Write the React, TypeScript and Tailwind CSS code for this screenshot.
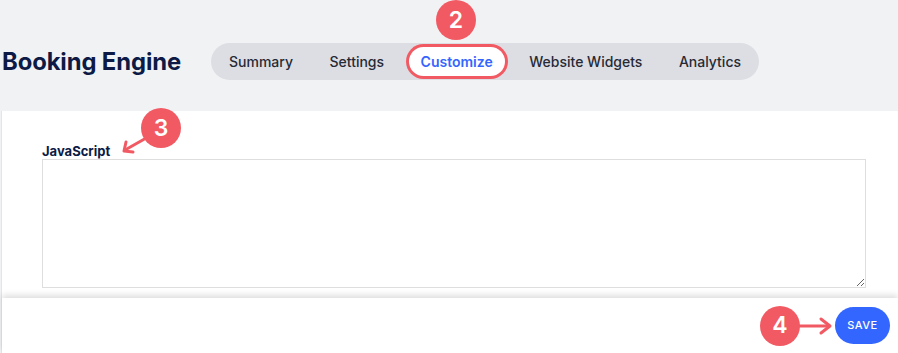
import React from "react";

const tabs = ["Summary", "Settings", "Customize", "Website Widgets", "Analytics"];

function Badge({ n, className }: { n: number; className: string }) {
  return (
    <div
      className={
        "absolute flex h-10 w-10 items-center justify-center rounded-full bg-[#f25a63] text-[23px] font-semibold text-white " +
        className
      }
    >
      {n}
    </div>
  );
}

export default function App() {
  return (
    <div className="relative flex h-[353px] w-[898px] flex-col overflow-hidden bg-[#f1f2f4] font-['Inter',sans-serif]">
      {/* Header */}
      <header className="relative flex h-[111px] shrink-0 items-center pl-[2px] pt-[12px]">
        <h1 className="text-[23.8px] font-bold tracking-[-0.1px] text-[#0c1a45]">Booking Engine</h1>
        <nav className="ml-[30px] flex h-[37px] items-center gap-[12.5px] rounded-full bg-[#dcdee3] px-[6px]">
          {tabs.map((t) =>
            t === "Customize" ? (
              <button
                key={t}
                className="h-[29px] rounded-full bg-white px-3 text-[14px] font-semibold text-[#3366ff] ring-[3px] ring-[#f25a63]"
              >
                {t}
              </button>
            ) : (
              <button key={t} className="h-[29px] px-3 text-[14px] font-medium text-[#272a36]">
                {t}
              </button>
            )
          )}
        </nav>
        <Badge n={2} className="left-[436px] top-0" />
      </header>

      {/* Body */}
      <main className="relative ml-px flex flex-1 flex-col border-l border-[#e4e5e8] bg-white">
        <section className="relative flex-1 pl-[40px] pr-[32px] pt-[33px]">
          <label className="block text-[13px] font-bold leading-[14px] text-[#0c1a45]">JavaScript</label>
          <textarea className="mt-[1px] block h-[129px] w-full resize-y border border-[#dedede] bg-white outline-none" />
          <Badge n={3} className="left-[139px] top-[-3px]" />
          <svg className="absolute left-[118px] top-[20px]" width="32" height="26" viewBox="0 0 32 26" fill="none">
            <path d="M28 6 L5 19" stroke="#f25a63" strokeWidth="3" strokeLinecap="round" />
            <path d="M6 11 L4 20 L13 21" stroke="#f25a63" strokeWidth="3" strokeLinecap="round" strokeLinejoin="round" />
          </svg>
        </section>

        <footer className="relative z-10 flex h-[55px] shrink-0 items-center justify-end bg-white pr-[8px] shadow-[0_-3px_6px_rgba(0,0,0,0.13)]">
          <div className="relative mr-[2px] flex items-center">
            <div className="flex h-10 w-10 items-center justify-center rounded-full bg-[#f25a63] text-[23px] font-semibold text-white">
              4
            </div>
            <svg width="34" height="20" viewBox="0 0 34 20" fill="none" className="-ml-[1px]">
              <path d="M0 10 L30 10" stroke="#f25a63" strokeWidth="3" strokeLinecap="round" />
              <path d="M22 3 L31 10 L22 17" stroke="#f25a63" strokeWidth="3" strokeLinecap="round" strokeLinejoin="round" />
            </svg>
          </div>
          <button className="h-[37px] w-[55px] rounded-full bg-[#3366ff] text-[11px] font-medium tracking-[0.5px] text-white">
            SAVE
          </button>
        </footer>
      </main>
    </div>
  );
}
